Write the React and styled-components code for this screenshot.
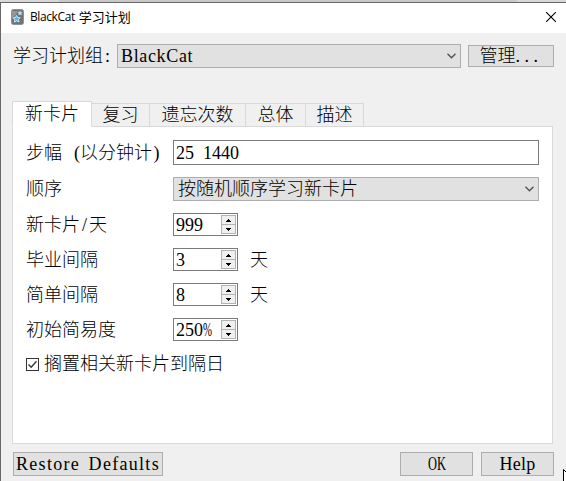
import React from 'react';
import styled, { createGlobalStyle } from 'styled-components';

const GlobalStyle = createGlobalStyle`
  * { box-sizing: border-box; }
  body {
    margin: 0;
    overflow: hidden;
    background: #f0f0f0;
    color: #000;
    font: 300 18px/22px "Liberation Serif", "Noto Sans CJK SC", serif;
  }
`;

const Screen = styled.div`
  width: 566px;
  height: 481px;
  display: flex;
  flex-direction: column;
  position: relative;
  overflow: hidden;
`;

const Backdrop = styled.div`
  height: 2px;
  flex: none;
  background: linear-gradient(90deg, #d8d8d8 0 59px, #c8c8c8 59px 517px, #d8d8d8 517px);
`;

const Window = styled.div`
  flex: 1;
  min-height: 0;
  border-top: 1px solid #686868;
  border-left: 1px solid #686868;
  background: #f0f0f0;
`;

const TitleBar = styled.div`
  height: 30px;
  padding: 0 10px 2px;
  display: flex;
  align-items: center;
  background: #fff;
`;

const Title = styled.div`
  flex: 1;
  margin-left: 6px;
  display: flex;
  gap: 4px;
  white-space: nowrap;
  font: 400 12px/18px "Open Sans", "Noto Sans CJK SC", sans-serif;
  letter-spacing: -0.4px;
`;

const TitleName = styled.span`
  font-size: 13px;
  letter-spacing: 0;
`;

const DeckRow = styled.div`
  height: 24px;
  margin: 11px 0 0 12px;
  display: flex;
  align-items: center;
`;

const DeckLabel = styled.div`
  width: 104px;
  white-space: pre;
`;

const Latin = styled.span`
  display: inline-block;
  letter-spacing: ${(p) => p.$track || 0}px;
  word-spacing: ${(p) => p.$word || 0}px;
  transform: scaleX(${(p) => p.$stretch || 1});
  transform-origin: ${(p) => p.$origin || 'left'};
  white-space: pre;
`;

const Sign = styled.span`
  display: inline-block;
  width: ${(p) => p.$width || 9}px;
  text-align: ${(p) => p.$align || 'center'};
`;

const Combo = styled.div`
  width: ${(p) => p.$width}px;
  height: 24px;
  padding: 0 4px 0 ${(p) => p.$inset || 3}px;
  display: flex;
  align-items: center;
  justify-content: space-between;
  border: 1px solid #adadad;
  background: #e1e1e1;
`;

const Button = styled.button`
  width: ${(p) => p.$width}px;
  height: ${(p) => p.$height || 24}px;
  margin-left: ${(p) => p.$left || 0}px;
  padding: 0;
  display: flex;
  align-items: center;
  justify-content: center;
  border: 1px solid #adadad;
  background: #e1e1e1;
  color: #000;
  font: inherit;
  white-space: nowrap;
`;

const Tabs = styled.div`
  height: 26px;
  margin: 33px 0 -1px 11px;
  display: flex;
  align-items: flex-end;
  position: relative;
`;

const Tab = styled.div`
  width: ${(p) => p.$width}px;
  height: ${(p) => (p.$active ? 26 : 24)}px;
  display: flex;
  align-items: center;
  justify-content: center;
  border: 1px solid #d9d9d9;
  border-left-width: ${(p) => (p.$active ? 1 : 0)}px;
  border-bottom-color: ${(p) => (p.$active ? '#fff' : '#d9d9d9')};
  background: ${(p) => (p.$active ? '#fff' : '#f0f0f0')};
`;

const Panel = styled.div`
  width: 541px;
  height: 318px;
  margin-left: 11px;
  padding: 13px 12px 0 13px;
  border: 1px solid #d9d9d9;
  background: #fff;
`;

const Form = styled.div`
  display: grid;
  grid-template-columns: 147px 366px;
  grid-template-rows: 25px 24px repeat(4, 23px);
  row-gap: 12px;
  align-items: center;
`;

const Label = styled.label`
  white-space: nowrap;
`;

const Field = styled.div`
  height: 25px;
  padding: 0 2px;
  display: flex;
  align-items: center;
  border: 1px solid #7a7a7a;
  word-spacing: 4.5px;
`;

const SpinRow = styled.div`
  display: flex;
  align-items: center;
  gap: 12px;
`;

const SpinBox = styled.div`
  width: 65px;
  height: 23px;
  padding: 0 1px 0 2px;
  display: flex;
  align-items: center;
  justify-content: space-between;
  border: 1px solid #7a7a7a;
  background: #fff;
`;

const Stepper = styled.div`
  width: 15px;
  height: 19px;
  display: flex;
  flex-direction: column;
  border: 1px solid #b2b2b2;
  background: #f0f0f0;
`;

const Step = styled.div`
  flex: 1;
  display: flex;
  align-items: center;
  justify-content: center;
  & + & { border-top: 1px solid #b2b2b2; }
`;

const CheckRow = styled.div`
  height: 24px;
  margin-top: 11px;
  display: flex;
  align-items: center;
  gap: 5px;
`;

const CheckBox = styled.div`
  width: 13px;
  height: 13px;
  display: flex;
  border: 1px solid #333;
`;

const Footer = styled.div`
  margin: 8px 0 0 12px;
  display: flex;
`;

const Cursor = styled.svg`
  position: absolute;
  left: 563px;
  top: 469px;
`;

const AppIcon = () => (
  <svg width="13" height="16" viewBox="0 0 13 16">
    <rect x="0.5" y="0.5" width="12" height="15" rx="2" fill="#707376" stroke="#8e9194" />
    <path d="M1 2h6L4 7 1 9z" fill="#94979a" />
    <path d="M5.5 6.5l1.2 2 2.4.2-1.6 1.7.5 2.5-2.4-1-2.2 1.2.3-2.4-1.6-1.8 2.4-.4z" fill="#54b5f5" stroke="#d3edff" strokeWidth="0.9" />
    <path d="M9 2l.6 1.3 1.6.1-1.1 1.1.3 1.5L9 5.3 7.7 6l.2-1.5L6.9 3.4l1.4-.1z" fill="#b7def5" stroke="#e1f2fc" strokeWidth="0.4" />
  </svg>
);

const CloseIcon = () => (
  <svg width="10" height="10" viewBox="0 0 10 10">
    <path d="M0 0l10 10M10 0L0 10" stroke="#000" strokeWidth="1.1" />
  </svg>
);

const Chevron = () => (
  <svg width="9" height="6" viewBox="0 0 9 6">
    <path d="M.5.8l4 4 4-4" fill="none" stroke="#505050" strokeWidth="1.3" />
  </svg>
);

const Arrow = ({ down }) => (
  <svg width="5" height="3" viewBox="0 0 5 3" shapeRendering="crispEdges">
    <path d={down ? 'M0 0h5v1H4v1H3v1H2V2H1V1H0z' : 'M0 3h5V2H4V1H3V0H2v1H1v1H0z'} />
  </svg>
);

const Spin = ({ value, unit }) => (
  <SpinRow>
    <SpinBox>
      {value}
      <Stepper>
        <Step><Arrow /></Step>
        <Step><Arrow down /></Step>
      </Stepper>
    </SpinBox>
    {unit && <span>{unit}</span>}
  </SpinRow>
);

const tabs = [
  ['新卡片', 80],
  ['复习', 58],
  ['遗忘次数', 96],
  ['总体', 60],
  ['描述', 58],
];

export default function App() {
  return (
    <Screen>
      <GlobalStyle />
      <Backdrop />
      <Window>
        <TitleBar>
          <AppIcon />
          <Title>
            <span>BlackCat</span>
            <TitleName>学习计划</TitleName>
          </Title>
          <CloseIcon />
        </TitleBar>
        <DeckRow>
          <DeckLabel>学习计划组<Sign>:</Sign></DeckLabel>
          <Combo $width={344}><Latin $track={0.65}>BlackCat</Latin><Chevron /></Combo>
          <Button $width={86} $height={22} $left={7}>管理<Latin $track={4.5}>...</Latin></Button>
        </DeckRow>
        <Tabs>
          {tabs.map(([name, width], i) => (
            <Tab key={name} $width={width} $active={i === 0}>{name}</Tab>
          ))}
        </Tabs>
        <Panel>
          <Form>
            <Label>步幅<Sign $width={18} $align="right">(</Sign>以分钟计<Sign>)</Sign></Label>
            <Field>25 1440</Field>
            <Label>顺序</Label>
            <Combo $width={366} $inset={4}>按随机顺序学习新卡片<Chevron /></Combo>
            <Label>新卡片<Sign>/</Sign>天</Label>
            <Spin value="999" />
            <Label>毕业间隔</Label>
            <Spin value="3" unit="天" />
            <Label>简单间隔</Label>
            <Spin value="8" unit="天" />
            <Label>初始简易度</Label>
            <Spin value={<span>250<Latin $stretch={0.6}>%</Latin></span>} />
          </Form>
          <CheckRow>
            <CheckBox>
              <svg width="11" height="11" viewBox="0 0 11 11">
                <path d="M1.5 5.5l2.7 2.8 5.3-6" fill="none" stroke="#333" strokeWidth="1.3" />
              </svg>
            </CheckBox>
            <span>搁置相关新卡片到隔日</span>
          </CheckRow>
        </Panel>
        <Footer>
          <Button $width={150}><Latin $track={1.3} $word={2.7}>Restore Defaults</Latin></Button>
          <Button $width={73} $left={237}><Latin $stretch={0.69} $origin="center">OK</Latin></Button>
          <Button $width={73} $left={8}><Latin $track={0.3}>Help</Latin></Button>
        </Footer>
      </Window>
      <Cursor width="10" height="16" viewBox="0 0 10 16">
        <path d="M.5.5v15l3-3 3-1 3-2z" fill="#fff" stroke="#000" />
      </Cursor>
    </Screen>
  );
}
